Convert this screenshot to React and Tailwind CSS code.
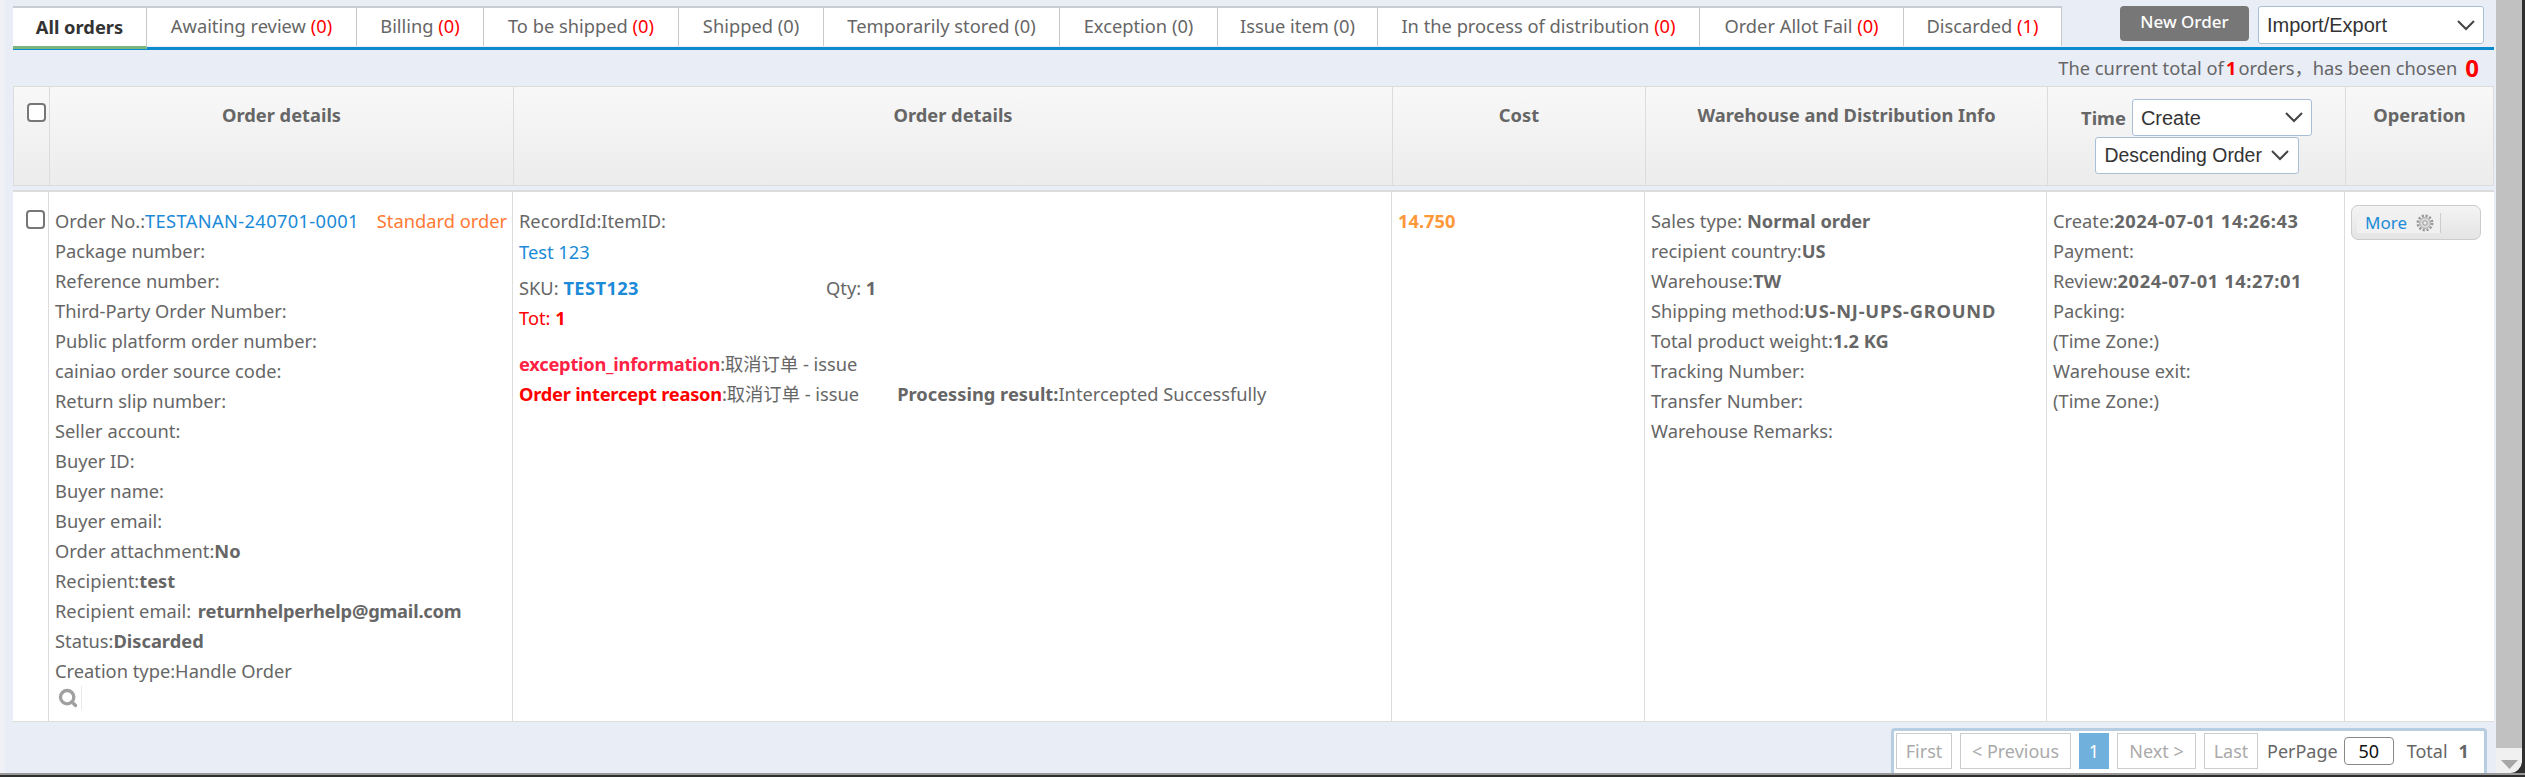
import { Search } from 'lucide-react';

const font = 'font-["Noto_Sans","Noto_Sans_CJK_SC",sans-serif]';

const tabs = [
  { label: 'All orders', w: 'w-[134px]', active: true },
  { label: 'Awaiting review', n: '(0)', red: true, w: 'w-[210px]' },
  { label: 'Billing', n: '(0)', red: true, w: 'w-[127px]' },
  { label: 'To be shipped', n: '(0)', red: true, w: 'w-[195px]' },
  { label: 'Shipped', n: '(0)', w: 'w-[145px]' },
  { label: 'Temporarily stored', n: '(0)', w: 'w-[236px]' },
  { label: 'Exception', n: '(0)', w: 'w-[158px]' },
  { label: 'Issue item', n: '(0)', w: 'w-[160px]' },
  { label: 'In the process of distribution', n: '(0)', red: true, w: 'w-[322px]' },
  { label: 'Order Allot Fail', n: '(0)', red: true, w: 'w-[204px]' },
  { label: 'Discarded', n: '(1)', red: true, w: 'w-[158px]' },
];

const Chevron = () => (
  <svg width="18" height="11" viewBox="0 0 18 11" fill="none" stroke="#444" strokeWidth="2">
    <path d="M1 1l8 8 8-8" />
  </svg>
);

const Gear = () => (
  <svg width="18" height="18" viewBox="0 0 18 18" className="ml-[9px]">
    <circle cx="9" cy="9" r="7.2" fill="none" stroke="#999" strokeWidth="2.6" strokeDasharray="2.2 1.6" />
    <circle cx="9" cy="9" r="5.4" fill="#d8d8d8" stroke="#aaa" />
    <circle cx="9" cy="9" r="2.2" fill="#eee" stroke="#999" />
  </svg>
);

const Sel = ({ label, className }) => (
  <div className={`flex items-center justify-between bg-white border border-[#a9bfd6] rounded-[3px] font-["Liberation_Sans",sans-serif] font-normal text-[#333] ${className}`}>
    <span>{label}</span>
    <Chevron />
  </div>
);

const Line = ({ children }) => <div className="h-[30px] leading-[30px] whitespace-nowrap">{children}</div>;

const Check = () => <div className="h-[19px] w-[19px] rounded-[4px] border-2 border-[#777] bg-white" />;

const App = () => (
  <div className={`${font} flex h-[777px] w-[2525px] flex-col overflow-hidden bg-[#2f2f2f] text-[18.3px] text-[#666]`}>
    <div className="flex h-[773px]">
      <div className="h-full w-[2496px] overflow-hidden border-l-[5px] border-[#eff1f7] bg-[#e9edf6] pl-[8px] pt-[6px]">
        <div className="flex h-[44px] w-[2481px] items-start border-b-[3px] border-[#0b8bce]">
          <div className="flex h-[41px] items-start border-t-2 border-[#c9ccd3]">
            {tabs.map((t) => (
              <div
                key={t.label}
                className={`${t.w} flex items-center justify-center border-r border-[#c9c9c9] bg-white ${t.active ? 'h-[41px] border-b-[3px] border-b-[#7cb67f] pb-[1px] font-bold text-[#333]' : 'h-[38px] pb-[2px]'}`}
              >
                <span className="whitespace-nowrap">
                  {t.label}
                  {t.n && <span className={t.red ? 'text-[#f00]' : ''}> {t.n}</span>}
                </span>
              </div>
            ))}
          </div>
          <div className="ml-[58px] flex items-start gap-[9px]">
            <div className="flex h-[35px] w-[129px] items-center justify-center rounded-[4px] bg-[#777] pb-[3px] text-[17px] font-medium text-white">New Order</div>
            <Sel label="Import/Export" className="h-[38px] w-[226px] pl-[8px] pr-[8px] text-[20px]" />
          </div>
        </div>

        <div className="flex h-[36px] w-[2481px] items-center justify-end pr-[15px]">
          The current total of<b className="mx-[2px] text-[#f00]">1</b>orders，has been chosen<b className="ml-[8px] text-[24px] text-[#f00]">0</b>
        </div>

        <div className="flex h-[100px] w-[2481px] border border-[#dcdcdc] bg-gradient-to-b from-[#f8f8f8] to-[#ececec] text-center font-bold">
          <div className="w-[36px] border-r border-[#dcdcdc] pl-[13px] pt-[16px]"><Check /></div>
          <div className="w-[464px] border-r border-[#dcdcdc] pt-[14px]">Order details</div>
          <div className="w-[879px] border-r border-[#dcdcdc] pt-[14px]">Order details</div>
          <div className="w-[253px] border-r border-[#dcdcdc] pt-[14px]">Cost</div>
          <div className="w-[402px] border-r border-[#dcdcdc] pt-[14px]">Warehouse and Distribution Info</div>
          <div className="flex w-[298px] flex-col items-center border-r border-[#dcdcdc] pt-[12px]">
            <div className="flex items-center gap-[6px]">
              <span>Time</span>
              <Sel label="Create" className="h-[37px] w-[180px] pl-[8px] pr-[8px] text-[20px]" />
            </div>
            <Sel label="Descending Order" className="mt-[1px] h-[37px] w-[204px] pl-[9px] pr-[9px] text-[19.4px]" />
          </div>
          <div className="flex-1 pt-[14px]">Operation</div>
        </div>

        <div className="mt-[4px] flex h-[532px] w-[2481px] border-t-2 border-b border-[#dcdcdc] bg-white">
          <div className="w-[36px] border-r border-[#dcdcdc] pl-[13px] pt-[18px]"><Check /></div>
          <div className="w-[464px] border-r border-[#dcdcdc] pl-[6px] pt-[14px]">
            <Line>
              Order No.:<span className="tracking-[0.35px] text-[#1b8ad8]">TESTANAN-240701-0001</span>
              <span className="ml-[18px] text-[18.3px] text-[#ff7a33]">Standard order</span>
            </Line>
            <Line>Package number:</Line>
            <Line>Reference number:</Line>
            <Line>Third-Party Order Number:</Line>
            <Line>Public platform order number:</Line>
            <Line>cainiao order source code:</Line>
            <Line>Return slip number:</Line>
            <Line>Seller account:</Line>
            <Line>Buyer ID:</Line>
            <Line>Buyer name:</Line>
            <Line>Buyer email:</Line>
            <Line>Order attachment:<b>No</b></Line>
            <Line>Recipient:<b>test</b></Line>
            <Line>Recipient email: <b className="ml-[2px] tracking-[-0.2px]">returnhelperhelp@gmail.com</b></Line>
            <Line>Status:<b>Discarded</b></Line>
            <Line>Creation type:Handle Order</Line>
            <div className="flex h-[24px] items-center pl-[3px]">
              <Search size={20} strokeWidth={4} className="text-[#a0a0a0]" />
              <div className="ml-[3px] h-[24px] border-r border-[#e8e8e8]" />
            </div>
          </div>
          <div className="w-[879px] border-r border-[#dcdcdc] pl-[6px] pt-[14px]">
            <Line>RecordId:ItemID:</Line>
            <div className="mt-[1px]"><Line><span className="text-[#1b8ad8]">Test 123</span></Line></div>
            <div className="mt-[6px] flex">
              <div className="w-[307px]"><Line>SKU: <b className="tracking-[0.4px] text-[#1b8ad8]">TEST123</b></Line></div>
              <Line>Qty: <b>1</b></Line>
            </div>
            <Line><span className="text-[#f00]">Tot: <b>1</b></span></Line>
            <div className="mt-[16px]">
              <Line><b className="tracking-[-0.25px] text-[#ff2244]">exception_information</b>:取消订单 - issue</Line>
              <Line>
                <b className="tracking-[-0.25px] text-[#f00]">Order intercept reason</b>:取消订单 - issue
                <b className="ml-[38px]">Processing result:</b>Intercepted Successfully
              </Line>
            </div>
          </div>
          <div className="w-[253px] border-r border-[#dcdcdc] pl-[6px] pt-[14px] font-bold text-[#ff9838]">
            <Line>14.750</Line>
          </div>
          <div className="w-[402px] border-r border-[#dcdcdc] pl-[6px] pt-[14px]">
            <Line>Sales type: <b>Normal order</b></Line>
            <Line>recipient country:<b>US</b></Line>
            <Line>Warehouse:<b>TW</b></Line>
            <Line>Shipping method:<b className="tracking-[0.8px]">US-NJ-UPS-GROUND</b></Line>
            <Line>Total product weight:<b>1.2 KG</b></Line>
            <Line>Tracking Number:</Line>
            <Line>Transfer Number:</Line>
            <Line>Warehouse Remarks:</Line>
          </div>
          <div className="w-[298px] border-r border-[#dcdcdc] pl-[6px] pt-[14px]">
            <Line>Create:<b className="tracking-[0.6px]">2024-07-01 14:26:43</b></Line>
            <Line>Payment:</Line>
            <Line>Review:<b className="tracking-[0.6px]">2024-07-01 14:27:01</b></Line>
            <Line>Packing:</Line>
            <Line>(Time Zone:)</Line>
            <Line>Warehouse exit:</Line>
            <Line>(Time Zone:)</Line>
          </div>
          <div className="flex-1 pl-[6px] pt-[13px]">
            <div className="flex h-[35px] w-[130px] items-center rounded-[7px] border border-[#ccc] bg-gradient-to-b from-[#f4f4f4] to-[#e4e4e4] pl-[5px]">
              <div className="flex h-[20px] w-[84px] items-center border-r border-[#ccc] bg-[#f0f0f0] pl-[8px]">
                <span className="text-[17px] text-[#1b8ad8]">More</span>
                <Gear />
              </div>
            </div>
          </div>
        </div>

        <div className="flex w-[2483px] justify-end pr-[9px] pt-[6px]">
          <div className="flex h-[46px] w-[596px] items-center rounded-t-[4px] border-[3px] border-b-0 border-[#b7cde2] bg-white pb-[3px] pl-[2px] text-[18px] text-[#aaa]">
            <div className="flex h-[36px] w-[56px] items-center justify-center border border-[#ccc]">First</div>
            <div className="ml-[8px] flex h-[36px] w-[111px] items-center justify-center border border-[#ccc]">&lt; Previous</div>
            <div className="ml-[8px] flex h-[36px] w-[30px] items-center justify-center bg-[#6fb0dc] text-white">1</div>
            <div className="ml-[8px] flex h-[36px] w-[79px] items-center justify-center border border-[#ccc]">Next &gt;</div>
            <div className="ml-[8px] flex h-[36px] w-[54px] items-center justify-center border border-[#ccc]">Last</div>
            <span className="ml-[9px] text-[#666]">PerPage</span>
            <div className="ml-[6px] flex h-[28px] w-[50px] items-center justify-center rounded-[4px] border border-[#888] text-[#111]">50</div>
            <span className="ml-[13px] text-[#666]">Total</span>
            <b className="ml-[11px] text-[#666]">1</b>
          </div>
        </div>
      </div>

      <div className="flex w-[26px] flex-col">
        <div className="flex-1 bg-[#c1c1c1]" />
        <div className="flex h-[25px] justify-center rounded-br-[12px] bg-[#f0f0f0] pt-[12px]">
          <svg width="17" height="9" viewBox="0 0 17 9"><path d="M0 0h17l-8.5 9z" fill="#a6a6a6" /></svg>
        </div>
      </div>
    </div>
    <div className="h-[2px] bg-[#999]" />
  </div>
);

export default App;
